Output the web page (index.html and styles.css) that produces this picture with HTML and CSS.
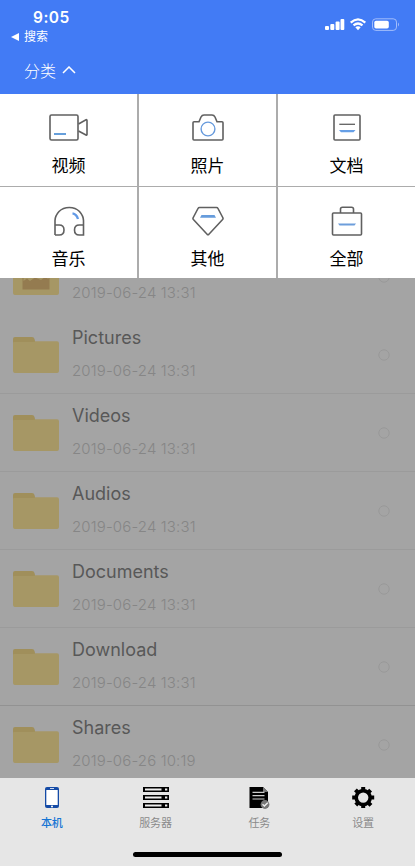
FILE: index.html
```html
<!DOCTYPE html>
<html lang="zh-CN">
<head>
<meta charset="utf-8">
<meta name="viewport" content="width=device-width, initial-scale=1">
<title>本机</title>
<link rel="stylesheet" href="styles.css">
</head>
<body>
<svg class="defs" width="0" height="0">
  <symbol id="folder" viewBox="0 0 46 36"><path d="M2 0H19Q21 0 21.500 2L22.500 6H0V2Q0 0 2 0Z" fill="#a08f5b"/><path d="M0 6Q0 5 1 5H20Q22 5 22.500 4.200H44Q46 4.200 46 6.200V34Q46 36 44 36H2Q0 36 0 34Z" fill="#a69765"/></symbol>
  <symbol id="pick" viewBox="0 0 12 12"><circle cx="6" cy="6" r="5.200" fill="none" stroke="#979797" stroke-width=".9"/></symbol>
</svg>
<div class="phone">
  <header class="header">
    <div class="status">
      <div class="clock">
        <div class="time">9:05</div>
        <div class="back"><svg width="8" height="8" viewBox="0 0 8 8"><path d="M8 0V8L0 4Z" fill="#fff"/></svg><span>搜索</span></div>
      </div>
      <svg class="signals" width="76" height="14" viewBox="324 18 76 14">
        <g fill="#fff"><rect x="325" y="26" width="4" height="4" rx="1"/><rect x="330.300" y="24" width="4" height="6" rx="1"/><rect x="335.600" y="21.500" width="4" height="8.500" rx="1"/><rect x="340.500" y="19" width="3.800" height="11" rx="1"/></g>
        <g fill="none" stroke="#fff" stroke-width="2.200"><path d="M350.700 22.600Q358 16 365.300 22.600"/><path d="M353.500 25.400Q358 21.600 362.500 25.400"/></g><path d="M355.300 27.300Q358 25.300 360.700 27.300L358 30.200Z" fill="#fff"/>
        <rect x="372.500" y="18.800" width="24" height="11.600" rx="3.300" fill="none" stroke="#a2bdfb"/><rect x="374.300" y="20.700" width="14.500" height="7.800" rx="1.700" fill="#fff"/><path d="M398 22.500Q400 24.500 398 26.500Z" fill="#a2bdfb"/>
      </svg>
    </div>
    <div class="category"><span>分类</span><svg width="14" height="8" viewBox="0 0 14 8"><path d="M1 7L7 1L13 7" fill="none" stroke="#fff" stroke-width="1.500"/></svg></div>
  </header>

  <section class="grid">
    <div class="cell"><svg width="46" height="34" viewBox="0 0 46 34"><g fill="none" stroke="#606060" stroke-width="1.600"><rect x="4" y="5" width="28" height="25" rx="1.500"/><path d="M32.500 14L40 9.700Q41 9.500 41 10.500V24.500Q41 25.500 40 25L32.500 21"/></g><path d="M8 24H20" stroke="#669fdb" stroke-width="2"/></svg><span>视频</span></div>
    <div class="cell"><svg width="46" height="34" viewBox="0 0 46 34"><path d="M9 11.700H14L16 7Q17 5 19 5H27Q29 5 30 7L32 11.700H37Q38 11.700 38 12.700V29Q38 30 37 30H9Q8 30 8 29V12.700Q8 11.700 9 11.700Z" fill="none" stroke="#606060" stroke-width="1.600"/><circle cx="23" cy="19" r="6.900" fill="none" stroke="#6599dc" stroke-width="1.400"/></svg><span>照片</span></div>
    <div class="cell"><svg width="46" height="34" viewBox="0 0 46 34"><rect x="10" y="5" width="26" height="25" rx="1" fill="none" stroke="#606060" stroke-width="1.600"/><path d="M15.300 14.300H31" stroke="#606060" stroke-width="1.300"/><path d="M15 20H31.500L29.500 22.300H17Z" fill="#669fe6"/></svg><span>文档</span></div>
    <div class="cell"><svg width="46" height="34" viewBox="0 0 46 34"><g fill="none" stroke="#606060" stroke-width="1.600"><path d="M9 32V17.500Q9 13 13 8.500Q17 4.500 23.300 4.500Q29.500 4.500 33.500 8.500Q37.500 13 37.500 17.500V32H33.300Q28.500 32 28.500 27Q28.500 22 33.300 22H37.500M9 22H13.200Q18 22 18 27Q18 32 13.200 32H9"/></g><path d="M26.500 10.400Q30.500 11 32 16" fill="none" stroke="#629ae6" stroke-width="2.300"/></svg><span>音乐</span></div>
    <div class="cell"><svg width="46" height="34" viewBox="0 0 46 34"><path d="M14.500 4.500H31.500Q32.500 4.500 33 5.500L38 15Q38.300 15.700 37.600 16.500L23.700 31.500Q23 32 22.300 31.500L8.400 16.500Q7.700 15.700 8 15L13 5.500Q13.500 4.500 14.500 4.500Z" fill="none" stroke="#606060" stroke-width="1.600"/><path d="M16.500 12H29.500L31 14.700H15Z" fill="#669cdc"/></svg><span>其他</span></div>
    <div class="cell"><svg width="46" height="34" viewBox="0 0 46 34"><g fill="none" stroke="#606060" stroke-width="1.600"><rect x="8.500" y="10" width="29" height="22" rx="1"/><path d="M16.500 10V6Q16.500 4.300 18.500 4.300H27.500Q29.500 4.300 29.500 6V10"/></g><path d="M14 20.500H32L30.500 22.500H15.500Z" fill="#6d9edb"/></svg><span>全部</span></div>
  </section>

  <main class="list">
    <div class="row partial"><svg class="folder" viewBox="0 0 46 36"><use href="#folder"/><path d="M9.500 10H36.500V30.500H9.500Z" fill="#947b50"/><path d="M10.500 11H35.500V20L32 18L28 21L22 18.500L17 22L14 19.500L10.500 22Z" fill="#a69765"/></svg><div class="info"><div class="date">2019-06-24 13:31</div></div><svg class="pick"><use href="#pick"/></svg></div>
    <div class="row"><svg class="folder"><use href="#folder"/></svg><div class="info"><div class="name">Pictures</div><div class="date">2019-06-24 13:31</div></div><svg class="pick"><use href="#pick"/></svg></div>
    <div class="row"><svg class="folder"><use href="#folder"/></svg><div class="info"><div class="name">Videos</div><div class="date">2019-06-24 13:31</div></div><svg class="pick"><use href="#pick"/></svg></div>
    <div class="row"><svg class="folder"><use href="#folder"/></svg><div class="info"><div class="name">Audios</div><div class="date">2019-06-24 13:31</div></div><svg class="pick"><use href="#pick"/></svg></div>
    <div class="row"><svg class="folder"><use href="#folder"/></svg><div class="info"><div class="name">Documents</div><div class="date">2019-06-24 13:31</div></div><svg class="pick"><use href="#pick"/></svg></div>
    <div class="row strong"><svg class="folder"><use href="#folder"/></svg><div class="info"><div class="name">Download</div><div class="date">2019-06-24 13:31</div></div><svg class="pick"><use href="#pick"/></svg></div>
    <div class="row"><svg class="folder"><use href="#folder"/></svg><div class="info"><div class="name">Shares</div><div class="date">2019-06-26 10:19</div></div><svg class="pick"><use href="#pick"/></svg></div>
  </main>

  <footer class="footer">
    <nav class="tabs">
      <div class="tab active"><svg width="26" height="22" viewBox="0 0 26 22"><rect x="6" y="0" width="14" height="21" rx="2" fill="#154ba6"/><path d="M7.300 3H18.700V18H7.300Z" fill="#fff"/><path d="M11 1.500H15" stroke="#fff" stroke-width=".8"/><circle cx="13" cy="19.600" r="1" fill="#fff"/></svg><span>本机</span></div>
      <div class="tab"><svg width="26" height="22" viewBox="0 0 26 22"><path d="M0 0H26V5H0ZM0 8H26V13H0ZM0 16H26V21H0Z"/><path d="M2 1.500H18.500V3.600H2ZM2 9.500H18.500V11.600H2ZM2 17.500H18.500V19.600H2ZM22 1.500H24.300V3.600H22ZM22 9.500H24.300V11.600H22ZM22 17.500H24.300V19.600H22Z" fill="#eee"/></svg><span>服务器</span></div>
      <div class="tab"><svg width="26" height="22" viewBox="0 0 26 22"><path d="M3.500 0H17L22 5V21H3.500Z"/><path d="M17 0L22 5H17Z" fill="#777"/><path d="M6.500 5.300H18.500M6.500 8.700H18.500M6.500 12H18.500" stroke="#ccc" stroke-width="1.200"/><circle cx="19" cy="17.500" r="4.400" fill="#777"/><path d="M16.500 17.300L18.400 19L21.800 15.700" fill="none" stroke="#eee" stroke-width="1.400"/></svg><span>任务</span></div>
      <div class="tab"><svg width="26" height="22" viewBox="0 0 26 22"><g transform="translate(13.200 10.600)"><circle r="7" fill="none" stroke="#000" stroke-width="3.600"/><g id="teeth"><path d="M-2-10.500H2V-7H-2ZM-2 7H2V10.500H-2ZM-11-2H-7V2H-11ZM7-2H11V2H7Z"/></g><use href="#teeth" transform="rotate(45)"/></g></svg><span>设置</span></div>
    </nav>
    <div class="home"></div>
  </footer>
</div>
</body>
</html>
```

FILE: styles.css
```css
* { box-sizing: border-box; }
body { margin: 0; font-family: Inter, "Noto Sans CJK SC", sans-serif; }
svg { display: block; flex: none; }
.defs { position: absolute; }
.phone { width: 415px; height: 866px; display: flex; flex-direction: column; overflow: hidden; background: #a4a4a4; }

.header { height: 94px; flex: none; background: #427bf5; color: #fff; display: flex; flex-direction: column; }
.status { display: flex; justify-content: space-between; height: 47px; padding: 8px 15px 0 11px; }
.time { font-size: 15.5px; line-height: 19px; font-weight: 600; padding-left: 22px; letter-spacing: .5px; }
.back { display: flex; align-items: center; gap: 5px; font-size: 12px; line-height: 20px; }
.signals { margin-top: 10px; }
.category { display: flex; align-items: center; gap: 6px; padding-left: 24px; height: 46px; font-size: 16px; font-weight: 300; }

.grid { flex: none; height: 184px; display: grid; grid-template-columns: 137px 137px 137px; grid-template-rows: 92px 91px; column-gap: 2px; row-gap: 1px; background: #acacac; }
.cell { background: #fff; display: flex; flex-direction: column; align-items: center; padding-top: 16px; font-size: 17px; line-height: 24px; color: #000; }
.cell span { margin-top: 10px; }

.list { flex: none; height: 500px; overflow: hidden; background: #a4a4a4; }
.row { height: 78px; border-bottom: 1px solid #9b9b9b; display: flex; padding: 0 25px 0 13px; }
.row.partial { margin-top: -40px; border-bottom-color: transparent; }
.row.partial .info { padding-top: 34px; }
.row.strong { border-bottom-color: #929292; }
.folder { width: 46px; height: 36px; margin-top: 21px; }
.info { flex: 1; padding: 10px 0 0 13px; white-space: nowrap; }
.name { font-size: 18px; line-height: 24px; color: #585858; }
.date { font-size: 15px; line-height: 22px; margin-top: 10px; color: #868686; font-weight: 300; letter-spacing: .13px; }
.pick { width: 12px; height: 12px; margin-top: 33px; }

.footer { height: 88px; flex: none; background: #e6e6e6; display: flex; flex-direction: column; align-items: center; justify-content: space-between; padding-bottom: 9px; }
.tabs { width: 100%; display: grid; grid-template-columns: repeat(4, 1fr); padding-top: 9px; }
.tab { display: flex; flex-direction: column; align-items: center; font-size: 11px; line-height: 16px; color: #8a8a8a; }
.tab span { margin-top: 6px; }
.active { color: #1474d4; font-weight: 500; }
.home { width: 149px; height: 5px; border-radius: 3px; background: #000; }
```
